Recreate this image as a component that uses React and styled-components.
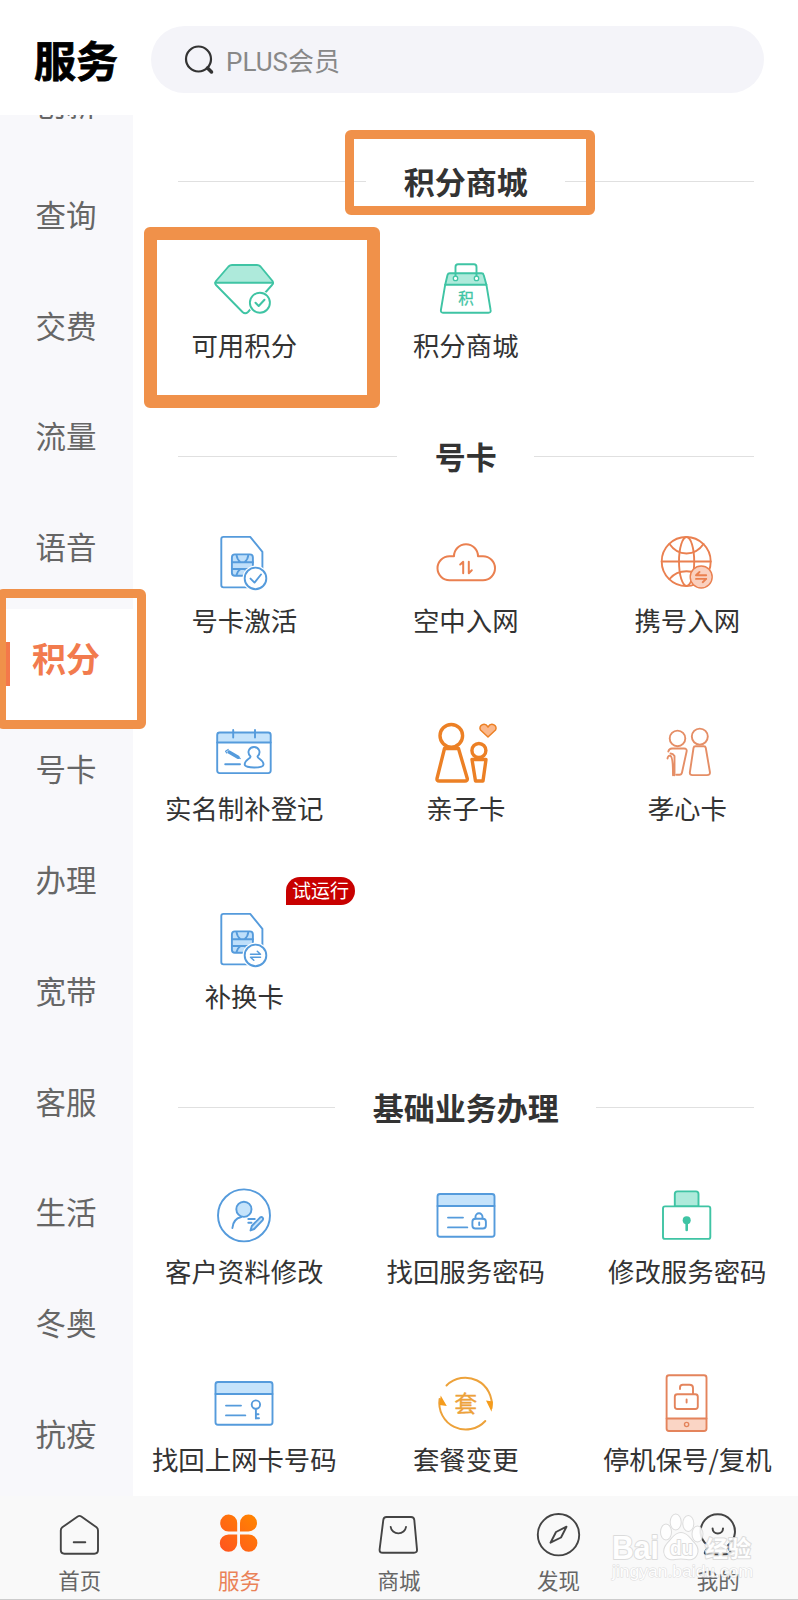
import React from 'react';
import styled, { createGlobalStyle, css } from 'styled-components';

const GlobalStyle = createGlobalStyle`
  * {
    box-sizing: border-box;
  }
  body {
    margin: 0;
    background: #fff;
    font-family: Roboto, 'Noto Sans CJK SC', sans-serif;
    color: #333;
  }
`;

// Styled Components
const Page = styled.div`
  position: relative;
  display: flex;
  flex-direction: column;
  width: 798px;
  height: 1600px;
  overflow: hidden;
  background: #fff;
`;

const Header = styled.header`
  display: flex;
  flex: none;
  align-items: flex-start;
  height: 115px;
  padding: 26px 34px 0;
`;

const PageTitle = styled.h1`
  width: 117px;
  margin: 0;
  font-family: 'Noto Sans CJK SC', sans-serif;
  font-size: 42px;
  line-height: 66px;
  font-weight: 700;
  color: #000;
  -webkit-text-stroke: 0.8px #000;
`;

const SearchBar = styled.div`
  display: flex;
  flex: 1;
  align-items: center;
  gap: 12px;
  height: 67px;
  padding-left: 33px;
  border-radius: 34px;
  background: #f4f4f9;
  font-size: 26px;
  color: #888;
`;

const Body = styled.div`
  display: flex;
  flex: none;
  height: 1381px;
  overflow: hidden;
`;

const Sidebar = styled.nav`
  flex: none;
  width: 133px;
  background: #f8f8fb;
  overflow: hidden;
`;

const SideList = styled.div`
  display: flex;
  flex-direction: column;
  margin-top: -60.5px;
`;

const SideItem = styled.div`
  display: flex;
  align-items: center;
  justify-content: center;
  height: 110.85px;
  padding: 0 1px 14px 0;
  font-family: 'Noto Sans CJK SC', sans-serif;
  font-size: 30.5px;
  color: #666;
  ${({ $active }) =>
    $active &&
    css`
      position: relative;
      background: #fff;
      font-size: 34px;
      font-weight: 700;
      color: #f27b4e;
      &::before {
        content: '';
        position: absolute;
        left: 0;
        top: 33px;
        width: 10px;
        height: 44px;
        background: #f4784a;
      }
    `}
`;

const Content = styled.main`
  flex: 1;
  padding: 23px 0 0 0.5px;
  overflow: hidden;
`;

const SectionTitle = styled.h2`
  display: flex;
  align-items: center;
  gap: 37.5px;
  height: 86.5px;
  margin: 0;
  padding: 0 44px;
  font-family: 'Noto Sans CJK SC', sans-serif;
  font-size: 31px;
  font-weight: 700;
  color: #333;
  &::before,
  &::after {
    content: '';
    flex: 1;
    height: 1px;
    background: #e0e0e0;
  }
`;

const TitleText = styled.span`
  margin-top: -2px;
`;

const Grid = styled.div`
  display: grid;
  grid-template-columns: repeat(3, 1fr);
  grid-auto-rows: 188.3px;
`;

const Cell = styled.div`
  position: relative;
  display: flex;
  flex-direction: column;
  align-items: center;
  padding-top: 28px;
`;

const CellLabel = styled.span`
  margin-top: 4.5px;
  font-family: 'Noto Sans CJK SC', sans-serif;
  font-size: 26.4px;
  line-height: 32px;
  white-space: nowrap;
`;

const Badge = styled.span`
  position: absolute;
  left: 152.5px;
  top: 1.5px;
  width: 69px;
  height: 28px;
  border-radius: 14px 14px 14px 0;
  background: #c80000;
  font-size: 19px;
  line-height: 29px;
  text-align: center;
  color: #fff;
`;

const Icon = styled.svg`
  flex: none;
  width: ${({ $size }) => $size}px;
  height: ${({ $size }) => $size}px;
  fill: none;
  stroke: ${({ $color }) => $color};
  stroke-width: ${({ $weight }) => $weight || 1.9};
  stroke-linecap: round;
  stroke-linejoin: round;
  overflow: visible;
`;

const Glyph = styled.text`
  font-family: 'Noto Sans CJK SC', sans-serif;
  font-size: ${({ $size }) => $size}px;
  text-anchor: middle;
  fill: ${({ $color }) => $color};
  stroke: ${({ $color }) => $color};
  stroke-width: 0.3;
`;

const TabBar = styled.footer`
  display: grid;
  grid-template-columns: repeat(5, 1fr);
  flex: none;
  height: 104px;
  border-bottom: 1px solid #ccc;
  background: #f9f9f9;
`;

const Tab = styled.div`
  display: flex;
  flex-direction: column;
  align-items: center;
  gap: 9px;
  padding-top: 15px;
  font-family: 'Noto Sans CJK SC', sans-serif;
  font-size: 21.5px;
  line-height: 24px;
  color: ${({ $active }) => ($active ? '#ea8258' : '#666')};
`;

const Frame = styled.div`
  position: absolute;
  left: ${({ $x }) => $x}px;
  top: ${({ $y }) => $y}px;
  width: ${({ $w }) => $w}px;
  height: ${({ $h }) => $h}px;
  border: ${({ $border }) => $border}px solid #f0914a;
  border-radius: 6px;
`;

const Watermark = styled.svg`
  position: absolute;
  left: 608px;
  top: 1508px;
  width: 150px;
  height: 78px;
  fill: #fff;
  stroke: #d8d8d8;
  stroke-width: 2;
  stroke-linejoin: round;
  paint-order: stroke;
  opacity: 0.88;
  font-family: 'Liberation Sans', 'Noto Sans CJK SC', sans-serif;
  font-weight: 700;
`;

const green = '#3fc4a4';
const blue = '#559bdc';
const orange = '#ea8050';

// Icons, 72 x 72
const DiamondIcon = () => (
  <Icon viewBox="0 0 72 72" $size={72} $color={green}>
    <path d="M24 12H49Q51 12 52.5 13.5L64.500 28Q65 29 65 29.700H7.300Q7.300 29 8 28L20.500 13.500Q22 12 24 12Z" fill="#aeeadb" />
    <path d="M7.300 29.700Q7 31 8 32L34.500 59Q37.300 61.500 40 59L64 32Q65.300 31 65 29.700" />
    <circle cx="51.900" cy="49.700" r="12" fill="#fff" stroke="none" />
    <circle cx="51.900" cy="49.700" r="10" fill="#fff" />
    <path d="M47.500 49.800L50.700 53L56.500 46.800" strokeWidth="2" />
  </Icon>
);

const BagIcon = () => (
  <Icon viewBox="0 0 72 72" $size={72} $color={green}>
    <path d="M15.200 31.700L17.500 22Q18 20.300 19.800 20.300H51.500Q53.300 20.300 53.700 22L56.400 31.700Z" fill="#aeeadb" />
    <path d="M15.200 31.700L10.900 57Q10.500 59.700 13 59.700H58.500Q61.200 59.700 60.600 57L56.400 31.700" />
    <path d="M25.500 23.400V14Q25.500 11.300 28 11.300H44Q46.500 11.300 46.500 14V23.400" />
    <circle cx="25.500" cy="25.400" r="2.200" fill="#fff" strokeWidth="1.300" />
    <circle cx="46.500" cy="25.400" r="2.200" fill="#fff" strokeWidth="1.300" />
    <Glyph x="36" y="51.300" $size={15.5} $color={green}>积</Glyph>
  </Icon>
);

const SimIcon = ({ swap }) => (
  <Icon viewBox="0 0 72 72" $size={72} $color={blue}>
    <path d="M42.200 9.900H15.500Q13.300 9.900 13.300 12V58.300Q13.300 60.400 15.500 60.400H54.400V24.800Z" />
    <rect x="23.900" y="27.400" width="21" height="21.400" rx="3" fill="#bfdffa" />
    <path d="M23.900 35.200H44.900M23.900 42H44.900M28.500 28Q29 32.500 32.500 35.200M40.300 28Q40 32.500 36.500 35.200M32.500 42Q29.500 44 28.500 48M36.500 42Q39.500 44 40.500 48" />
    <circle cx="47.500" cy="51.400" r="13" fill="#fff" stroke="none" />
    <circle cx="47.500" cy="51.400" r="10.800" fill="#fff" />
    {swap ? (
      <path d="M42.500 50.300H52.500L49.300 47.200M52.500 53.200H42.500L45.800 56.300" strokeWidth="1.500" />
    ) : (
      <path d="M42.500 51.600L46.500 55.600L53 47.500" />
    )}
  </Icon>
);

const CloudIcon = () => (
  <Icon viewBox="0 0 72 72" $size={72} $color={orange} $weight={2}>
    <path d="M19.500 53.200H53A12 12 0 0 0 53 29.200H48A12 12 0 0 0 24 29.200H19.500A12 12 0 0 0 19.500 53.200Z" />
    <path d="M30.200 37.500L33.200 34.800V46.200M38.800 34.800V46.200L41.800 43.300" />
  </Icon>
);

const GlobeIcon = () => (
  <Icon viewBox="0 0 72 72" $size={72} $color={orange}>
    <circle cx="35.200" cy="34.500" r="24.500" />
    <ellipse cx="35.600" cy="34.500" rx="7.600" ry="24.500" />
    <path d="M10.700 34.500H59.700M18.500 17Q25 26.500 35.500 26.500T52.500 17M18.500 52Q25 44.300 35.500 44.300T52.500 52" />
    <circle cx="50.200" cy="50" r="11" fill="#fad0bf" strokeWidth="1.400" />
    <path d="M45 48.300H55.200M45 48.300L48.500 45M55.200 51.900H45M55.200 51.900L51.700 55.200" />
  </Icon>
);

const RegisterIcon = () => (
  <Icon viewBox="0 0 72 72" $size={72} $color={blue}>
    <path d="M9.200 26.500V19Q9.200 16.500 11.700 16.500H60.200Q62.700 16.500 62.700 19V26.500Z" fill="#c5e3fb" />
    <path d="M9.200 26.500V54.600Q9.200 57.100 11.700 57.100H60.200Q62.700 57.100 62.700 54.600V26.500M25.200 14V21.500M47 14V21.500M17.200 48.200H32" />
    <path d="M21 36L30 41.300" strokeWidth="3.400" />
    <path d="M20.200 33.500L17.600 35.300L18.800 37M30 41L32.200 42.500" strokeWidth="1.200" />
    <path d="M42.500 40.500C38.500 36.500 41 31 46 31S53.500 36.500 49.500 40.500C49 42.500 55.500 43.500 55.500 48.500C55.500 52.500 36.500 52.500 36.700 48.500C36.700 43.500 43 42.500 42.500 40.500Z" />
  </Icon>
);

const ParentIcon = () => (
  <Icon viewBox="0 0 72 72" $size={72} $color="#ec8025" $weight={3.4}>
    <ellipse cx="21.300" cy="19.800" rx="11.300" ry="11.300" />
    <path d="M14.500 32.500H28.500L37.300 62.500Q37.600 65 35 65H9.200Q6.600 65 7 62.500Z" />
    <circle cx="48.900" cy="34.500" r="7" />
    <path d="M42 43.500H56L53 65H45.500Z" />
    <path d="M58 21L50.500 14C48 10 54.500 5.500 58 11C61.500 5.500 68 10 65.500 14Z" fill="#fbb88c" strokeWidth="1.500" />
  </Icon>
);

const ElderIcon = () => (
  <Icon viewBox="0 0 72 72" $size={72} $color="#e58e66">
    <circle cx="26.500" cy="22.400" r="7.800" />
    <circle cx="48.800" cy="20.600" r="8" />
    <path d="M44.500 30.300H52.800Q54.500 30.300 54.800 32L58.900 56Q59.300 59.100 56 59.100H41.500Q38.400 59.100 38.900 56L42.500 32Q42.800 30.300 44.500 30.300Z" />
    <path d="M17.300 35.500Q18.200 32.500 21 32.500H33Q36.200 32.500 35.600 35.500L31 56.500Q30.500 58.800 28.500 58.800H25.500M19.500 37.500Q22 37.500 23.500 40V59.300M16.500 42.500Q17 39 19.500 40Q22 41 22 59.300" />
  </Icon>
);

const ProfileIcon = () => (
  <Icon viewBox="0 0 72 72" $size={72} $color={blue}>
    <circle cx="36" cy="36.400" r="26" />
    <circle cx="35.900" cy="30.300" r="7.600" fill="#c5e3fb" />
    <path d="M24.400 49Q25 40 33.200 38M40.300 40H46.800M40.300 43.700H43.500" />
    <path d="M42.500 51.400L43.800 47L52 38.600Q53.500 37.400 54.600 38.600T54.500 41.400L46.200 50Z" fill="#c5e3fb" />
  </Icon>
);

const CardIcon = ({ children }) => (
  <Icon viewBox="0 0 72 72" $size={72} $color={blue}>
    <path d="M7.500 27V17.500Q7.500 15 10 15H62Q64.500 15 64.500 17.500V27Z" fill="#c5e3fb" />
    <path d="M7.500 27V55.300Q7.500 57.800 10 57.800H62Q64.500 57.800 64.500 55.300V27M18 38.600H33M18 48.400H37.300" />
    {children}
  </Icon>
);

const FindPasswordIcon = () => (
  <CardIcon>
    <rect x="42.400" y="39.800" width="13.500" height="9.700" rx="3" />
    <path d="M45.500 39.500V37.800A3.500 3.500 0 0 1 52.500 37.800V39.500M49.200 43.500V46" />
  </CardIcon>
);

const FindNumberIcon = () => (
  <CardIcon>
    <circle cx="47.900" cy="37.600" r="4.200" />
    <path d="M47.900 42V51.500M47.900 51.200H51M47.900 47.200H50.500" />
  </CardIcon>
);

const LockIcon = () => (
  <Icon viewBox="0 0 72 72" $size={72} $color={green}>
    <path d="M23.800 27.400V15Q23.800 12.400 26.300 12.400H45Q47.500 12.400 47.500 15V27.400Z" fill="#aeeadb" />
    <rect x="12" y="27.400" width="47.300" height="32.500" rx="2" fill="#fff" />
    <circle cx="35.700" cy="41.300" r="4" fill={green} stroke="none" />
    <path d="M35.700 42V51" strokeWidth="2.600" />
  </Icon>
);

const PackageIcon = () => (
  <Icon viewBox="0 0 72 72" $size={72} $color="#eda23a" $weight={2}>
    <path d="M16.500 18.500A26.500 26.500 0 0 1 61.500 41M55.300 54A26.500 26.500 0 0 1 9.600 32" />
    <path d="M56 33.600L63 34.500L61.500 44.800ZM16.800 39L9.400 38L10.700 28.400Z" fill="#f59c1c" stroke="none" />
    <Glyph x="35.700" y="45.300" $size={23} $color="#eda23a">套</Glyph>
  </Icon>
);

const PhoneIcon = () => (
  <Icon viewBox="0 0 72 72" $size={72} $color="#e4845c">
    <path d="M15.600 51.500H55.500V61.500Q55.500 64 53 64H18Q15.600 64 15.600 61.500Z" fill="#fad5c5" />
    <path d="M15.600 51.500V10.700Q15.600 8.200 18 8.200H53Q55.500 8.200 55.500 10.700V51.500" />
    <circle cx="35.600" cy="57.500" r="2.100" strokeWidth="1.400" />
    <rect x="23.800" y="27.200" width="23" height="14.800" rx="2.500" />
    <path d="M29 22V20.500Q29 17.800 31.800 17.800H38.500Q42 17.800 42 21V27M35.600 32.500V35.500" />
  </Icon>
);

// Tab icons, 48 x 48
const HomeIcon = () => (
  <Icon viewBox="0 0 48 48" $size={48} $color="#444">
    <path d="M21.700 5.500Q23.500 4.300 25.300 5.500L40.500 16.300Q42 17.500 42 19.500V39Q42 42.700 38.300 42.700H8.500Q4.800 42.700 4.800 39V19.500Q4.800 17.500 6.300 16.300ZM17.700 31.300H29.300" />
  </Icon>
);

const ServiceIcon = () => (
  <Icon viewBox="0 0 48 48" $size={48} $color="none">
    <defs>
      <linearGradient id="petal" gradientUnits="userSpaceOnUse" x1="5" y1="41" x2="41" y2="4">
        <stop offset="0" stopColor="#ff5320" />
        <stop offset="1" stopColor="#ff8500" />
      </linearGradient>
    </defs>
    <g fill="url(#petal)">
      <path d="M22.200 20.600H13.500A8.500 8.500 0 1 1 22.200 12.100Z" />
      <path d="M25 20.600V12.100A8.500 8.500 0 1 1 33.500 20.600Z" />
      <path d="M22.200 23.400V32A8.700 8.700 0 1 1 13.500 23.400Z" />
      <path d="M25 23.400H33.500A8.700 8.700 0 1 1 25 32Z" />
    </g>
  </Icon>
);

const MallIcon = () => (
  <Icon viewBox="0 0 48 48" $size={48} $color="#444">
    <path d="M11.500 6H36Q39 6 39.300 9L42 38.500Q42.300 41.800 39 41.800H7.700Q4.300 41.800 4.600 38.500L8.300 9Q8.600 6 11.500 6Z" />
    <path d="M15.700 16A7.700 7.200 0 0 0 31 16" />
  </Icon>
);

const DiscoverIcon = () => (
  <Icon viewBox="0 0 48 48" $size={48} $color="#444">
    <circle cx="23.500" cy="23.700" r="20.700" />
    <path d="M31.500 15.700L26 26.500L15.500 31.700L21 21Z" />
  </Icon>
);

const MineIcon = () => (
  <Icon viewBox="0 0 48 48" $size={48} $color="#444" $weight={2}>
    <path d="M13.500 34.300A17.200 17.200 0 1 1 34 34.300C32.500 38 38 39.500 36.500 42.500Q33 43.500 23.700 43.500T11 42.500C9.500 39.500 15.500 38 13.500 34.300Z" />
    <path d="M18.600 17.500A5.200 5 0 0 0 29 17.500" />
  </Icon>
);

const sideItems = ['创新', '查询', '交费', '流量', '语音', '积分', '号卡', '办理', '宽带', '客服', '生活', '冬奥', '抗疫'];

const sections = [
  {
    title: '积分商城',
    items: [
      { label: '可用积分', icon: <DiamondIcon /> },
      { label: '积分商城', icon: <BagIcon /> },
    ],
  },
  {
    title: '号卡',
    items: [
      { label: '号卡激活', icon: <SimIcon /> },
      { label: '空中入网', icon: <CloudIcon /> },
      { label: '携号入网', icon: <GlobeIcon /> },
      { label: '实名制补登记', icon: <RegisterIcon /> },
      { label: '亲子卡', icon: <ParentIcon /> },
      { label: '孝心卡', icon: <ElderIcon /> },
      { label: '补换卡', icon: <SimIcon swap />, badge: '试运行' },
    ],
  },
  {
    title: '基础业务办理',
    items: [
      { label: '客户资料修改', icon: <ProfileIcon /> },
      { label: '找回服务密码', icon: <FindPasswordIcon /> },
      { label: '修改服务密码', icon: <LockIcon /> },
      { label: '找回上网卡号码', icon: <FindNumberIcon /> },
      { label: '套餐变更', icon: <PackageIcon /> },
      { label: '停机保号/复机', icon: <PhoneIcon /> },
    ],
  },
];

const tabs = [
  { label: '首页', icon: <HomeIcon /> },
  { label: '服务', icon: <ServiceIcon /> },
  { label: '商城', icon: <MallIcon /> },
  { label: '发现', icon: <DiscoverIcon /> },
  { label: '我的', icon: <MineIcon /> },
];

const App = () => {
  const activeSide = '积分';
  const activeTab = '服务';

  return (
    <Page>
      <GlobalStyle />
      <Header>
        <PageTitle>服务</PageTitle>
        <SearchBar>
          <Icon viewBox="0 0 30 30" $size={30} $color="#333" $weight={2.2}>
            <circle cx="14.500" cy="14" r="12.500" />
            <path d="M23.500 23L27.500 27" strokeWidth="3.500" />
          </Icon>
          PLUS会员
        </SearchBar>
      </Header>

      <Body>
        <Sidebar>
          <SideList>
            {sideItems.map((name) => (
              <SideItem key={name} $active={name === activeSide}>
                {name}
              </SideItem>
            ))}
          </SideList>
        </Sidebar>
        <Content>
          {sections.map((section) => (
            <section key={section.title}>
              <SectionTitle>
                <TitleText>{section.title}</TitleText>
              </SectionTitle>
              <Grid>
                {section.items.map((item) => (
                  <Cell key={item.label}>
                    {item.icon}
                    <CellLabel>{item.label}</CellLabel>
                    {item.badge && <Badge>{item.badge}</Badge>}
                  </Cell>
                ))}
              </Grid>
            </section>
          ))}
        </Content>
      </Body>

      <TabBar>
        {tabs.map((tab) => (
          <Tab key={tab.label} $active={tab.label === activeTab}>
            {tab.icon}
            {tab.label}
          </Tab>
        ))}
      </TabBar>

      <Frame $x={345} $y={130} $w={250} $h={85} $border={9} />
      <Frame $x={144} $y={227} $w={236} $h={181} $border={13} />
      <Frame $x={-3} $y={589} $w={149} $h={140} $border={9} />

      <Watermark viewBox="0 0 150 78">
        <text x="4" y="51" fontSize="33" textLength="47" lengthAdjust="spacingAndGlyphs">Bai</text>
        <ellipse cx="58" cy="24" rx="5" ry="7.500" />
        <ellipse cx="67.700" cy="14" rx="5" ry="7.500" />
        <ellipse cx="80.300" cy="15.500" rx="5" ry="7.500" />
        <ellipse cx="89.500" cy="26" rx="5" ry="7.500" />
        <path d="M73 25C79 25 82 31 86 35C94 44 87 53 79 51Q73 50 67 51C58 53 52 44 60 35C64 31 67 25 73 25Z" />
        <text x="62" y="47" fontSize="20" textLength="23" lengthAdjust="spacingAndGlyphs">du</text>
        <text x="97" y="49" fontSize="23" textLength="46" lengthAdjust="spacingAndGlyphs">经验</text>
        <text x="4" y="69" fontSize="17" fontWeight="400" strokeWidth="1" textLength="141" lengthAdjust="spacingAndGlyphs">jingyan.baidu.com</text>
      </Watermark>
    </Page>
  );
};

export default App;
